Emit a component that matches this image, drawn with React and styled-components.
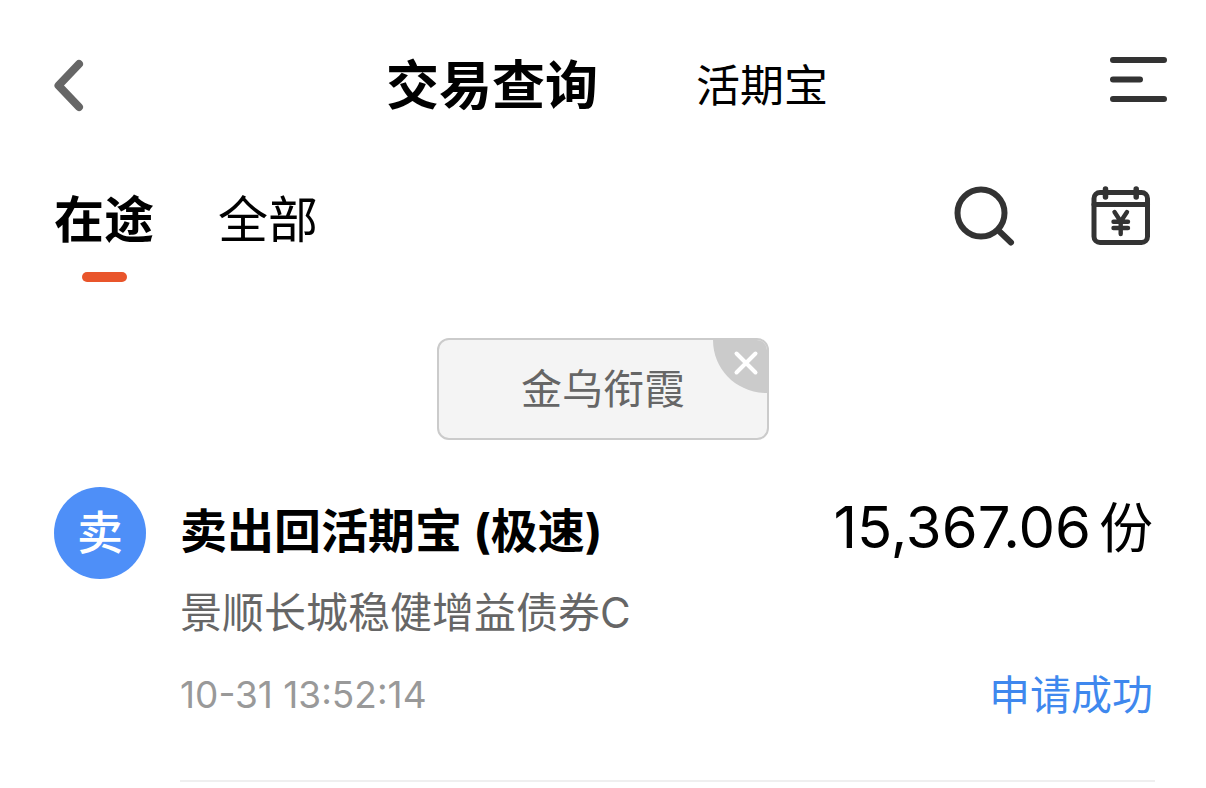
import React, { useState } from "react";
import styled, { createGlobalStyle } from "styled-components";

const GlobalStyle = createGlobalStyle`
	* {
		box-sizing: border-box;
	}
	body {
		margin: 0;
		background: #fff;
		color: #000;
		font-family: Inter, "Noto Sans CJK SC", sans-serif;
	}
	button {
		padding: 0;
		border: 0;
		background: none;
		color: inherit;
		font: inherit;
		cursor: pointer;
	}
	svg {
		display: block;
	}
`;

const Header = styled.header`
	display: grid;
	grid-template-columns: 1fr auto 1fr;
	align-items: center;
	height: 168px;
	padding: 0 36px 0 48px;
`;

const HeaderTabs = styled.nav`
	display: flex;
	align-items: center;
	gap: 98px;
	padding: 4px 4px 0 0;
`;

const HeaderTab = styled.button`
	font-size: ${({ $active }) => ($active ? "53px" : "44px")};
	font-weight: ${({ $active }) => ($active ? 700 : 400)};
	line-height: 64px;
`;

const IconButton = styled.button`
	justify-self: ${({ $end }) => ($end ? "end" : "start")};
`;

const Toolbar = styled.div`
	display: flex;
	justify-content: space-between;
	align-items: flex-start;
	padding: 16px 52px 0 54px;
`;

const Tabs = styled.nav`
	display: flex;
	gap: 64px;
`;

const Tab = styled.button`
	display: flex;
	flex-direction: column;
	align-items: center;
	gap: 16px;
	font-size: 50px;
	font-weight: ${({ $active }) => ($active ? 700 : 400)};
	line-height: 72px;

	&::after {
		content: "";
		width: 45px;
		height: 10px;
		border-radius: 5px;
		background: ${({ $active }) => ($active ? "#e9552b" : "transparent")};
	}
`;

const Actions = styled.div`
	display: flex;
	gap: 71px;
`;

const FilterBar = styled.div`
	display: flex;
	justify-content: center;
	padding: 56px 0 47px;
`;

const FilterTag = styled.div`
	position: relative;
	padding: 18px 82px;
	border: 2px solid #cbcbcb;
	border-radius: 12px;
	background: #f4f4f4;
	color: #666;
	font-size: 41px;
	line-height: 62px;
	overflow: hidden;
`;

const ClearButton = styled.button`
	position: absolute;
	top: 0;
	right: 0;
`;

const Record = styled.article`
	display: flex;
	gap: 34px;
	padding: 0 51px 0 54px;
`;

const Badge = styled.div`
	flex: none;
	width: 92px;
	height: 92px;
	border-radius: 50%;
	background: #4e8ff8;
	color: #fff;
	font-size: 46px;
	font-weight: 500;
	line-height: 90px;
	text-align: center;
`;

const Details = styled.div`
	flex: 1;
	height: 295px;
	border-bottom: 2px solid #efefef;
`;

const Line = styled.div`
	display: flex;
	justify-content: space-between;
	padding-right: 2px;
`;

const RecordTitle = styled.h2`
	margin: 0;
	font-size: 47px;
	font-weight: 700;
	line-height: 88px;
`;

const Amount = styled.span`
	font-size: 58px;
	line-height: 80px;
`;

const Unit = styled.span`
	margin-left: 8px;
	font-size: 54px;
`;

const Fund = styled.p`
	margin: 0;
	color: #666;
	font-size: 42px;
	line-height: 76px;
`;

const Time = styled.time`
	color: #999;
	font-size: 37px;
	line-height: 88px;
`;

const Status = styled.span`
	color: #3f88ee;
	font-size: 41px;
	line-height: 88px;
`;

const BackIcon = () => (
	<svg width="40" height="56" viewBox="0 0 40 56" fill="none" stroke="#666" strokeWidth="8" strokeLinecap="round" strokeLinejoin="round">
		<path d="M31 8 10.500 29.500l20.500 21.500" />
	</svg>
);

const MenuIcon = () => (
	<svg width="64" height="56" viewBox="0 0 64 56" stroke="#333" strokeWidth="6" strokeLinecap="round">
		<path d="M7 4h51M7 23.5h27M7 43h51" />
	</svg>
);

const SearchIcon = () => (
	<svg width="66" height="66" viewBox="0 0 66 66" fill="none" stroke="#333" strokeLinecap="round">
		<circle cx="30" cy="29" r="23.5" strokeWidth="6" />
		<path d="M47.5 46.5 60 58.500" strokeWidth="6" />
	</svg>
);

const CalendarIcon = () => (
	<svg width="66" height="66" viewBox="0 0 66 66" fill="none" stroke="#333" strokeWidth="5" strokeLinecap="round">
		<rect x="6" y="8.5" width="53.5" height="50" rx="6" />
		<path d="M6 20.5h53.500" />
		<path d="M17.5 5v8M48.2 5v8" strokeWidth="5.5" />
		<path d="m26.5 28 6.2 9.5L39 28M32.7 38v12M25.5 37.800h14.500M25.500 44h14.500" strokeWidth="4.400" />
	</svg>
);

const ClearIcon = () => (
	<svg width="54" height="54" viewBox="0 0 54 54">
		<path d="M0 0h54v53C24 53 0 30 0 0Z" fill="#cbcbcb" />
		<path d="m23.500 13.500 19 19M42.500 13.500 23.500 32.500" stroke="#fff" strokeWidth="4" strokeLinecap="round" />
	</svg>
);

const TABS = ["在途", "全部"];

const RECORDS = [
	{
		id: 1,
		type: "卖",
		title: "卖出回活期宝 (极速)",
		amount: "15,367.06",
		fund: "景顺长城稳健增益债券C",
		time: "10-31 13:52:14",
		status: "申请成功",
	},
];

const RecordItem = ({ record }) => (
	<Record>
		<Badge>{record.type}</Badge>
		<Details>
			<Line>
				<RecordTitle>{record.title}</RecordTitle>
				<Amount>
					{record.amount}
					<Unit>份</Unit>
				</Amount>
			</Line>
			<Fund>{record.fund}</Fund>
			<Line>
				<Time>{record.time}</Time>
				<Status>{record.status}</Status>
			</Line>
		</Details>
	</Record>
);

const App = () => {
	const [tab, setTab] = useState(TABS[0]);
	const [filter, setFilter] = useState("金乌衔霞");

	return (
		<>
			<GlobalStyle />
			<Header>
				<IconButton aria-label="返回">
					<BackIcon />
				</IconButton>
				<HeaderTabs>
					<HeaderTab $active>交易查询</HeaderTab>
					<HeaderTab>活期宝</HeaderTab>
				</HeaderTabs>
				<IconButton $end aria-label="菜单">
					<MenuIcon />
				</IconButton>
			</Header>
			<Toolbar>
				<Tabs>
					{TABS.map((name) => (
						<Tab key={name} $active={name === tab} onClick={() => setTab(name)}>
							{name}
						</Tab>
					))}
				</Tabs>
				<Actions>
					<IconButton aria-label="搜索">
						<SearchIcon />
					</IconButton>
					<IconButton aria-label="日期">
						<CalendarIcon />
					</IconButton>
				</Actions>
			</Toolbar>
			<FilterBar>
				{filter && (
					<FilterTag>
						{filter}
						<ClearButton aria-label="清除" onClick={() => setFilter("")}>
							<ClearIcon />
						</ClearButton>
					</FilterTag>
				)}
			</FilterBar>
			<main>
				{RECORDS.map((record) => (
					<RecordItem key={record.id} record={record} />
				))}
			</main>
		</>
	);
};

export default App;
